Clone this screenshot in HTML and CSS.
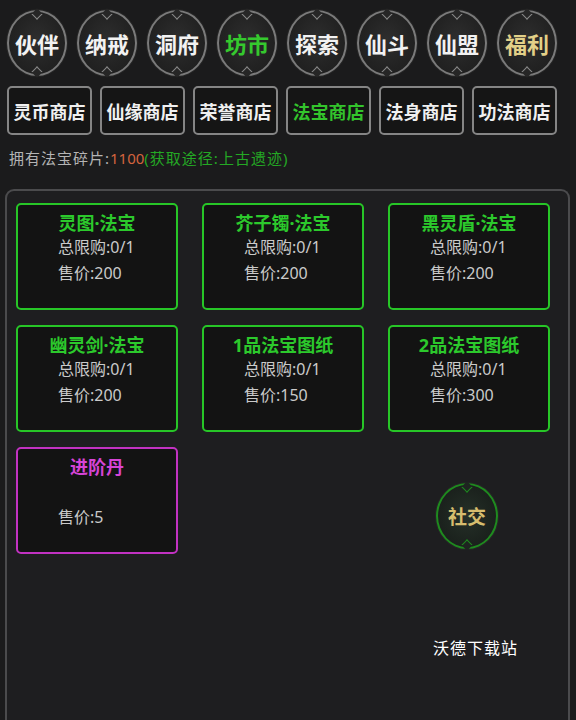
FILE: index.html
```html
<!DOCTYPE html>
<html lang="zh">
<head>
<meta charset="utf-8">
<title>法宝商店</title>
<link rel="stylesheet" href="styles.css">
</head>
<body>
<div class="screen">
  <nav class="nav">
    <div class="orb">伙伴</div>
    <div class="orb">纳戒</div>
    <div class="orb">洞府</div>
    <div class="orb orb-active">坊市</div>
    <div class="orb">探索</div>
    <div class="orb">仙斗</div>
    <div class="orb">仙盟</div>
    <div class="orb orb-gold">福利</div>
  </nav>
  <div class="tabs">
    <div class="tab">灵币商店</div>
    <div class="tab">仙缘商店</div>
    <div class="tab">荣誉商店</div>
    <div class="tab tab-active">法宝商店</div>
    <div class="tab">法身商店</div>
    <div class="tab">功法商店</div>
  </div>
  <div class="info">拥有法宝碎片:<span class="num">1100</span><span class="src">(获取途径:上古遗迹)</span></div>
  <section class="panel">
    <div class="grid">
      <div class="card">
        <div class="card-title">灵图·法宝</div>
        <div class="card-body"><div>总限购:0/1</div><div>售价:200</div></div>
      </div>
      <div class="card">
        <div class="card-title">芥子镯·法宝</div>
        <div class="card-body"><div>总限购:0/1</div><div>售价:200</div></div>
      </div>
      <div class="card">
        <div class="card-title">黑灵盾·法宝</div>
        <div class="card-body"><div>总限购:0/1</div><div>售价:200</div></div>
      </div>
      <div class="card">
        <div class="card-title">幽灵剑·法宝</div>
        <div class="card-body"><div>总限购:0/1</div><div>售价:200</div></div>
      </div>
      <div class="card">
        <div class="card-title">1品法宝图纸</div>
        <div class="card-body"><div>总限购:0/1</div><div>售价:150</div></div>
      </div>
      <div class="card">
        <div class="card-title">2品法宝图纸</div>
        <div class="card-body"><div>总限购:0/1</div><div>售价:300</div></div>
      </div>
      <div class="card card-purple">
        <div class="card-title">进阶丹</div>
        <div class="card-body"><div class="blank">&nbsp;</div><div>售价:5</div></div>
      </div>
    </div>
    <div class="orb orb-social">社交</div>
  </section>
  <div class="watermark">沃德下载站</div>
</div>
</body>
</html>
```

FILE: styles.css
```css
html, body {
  margin: 0;
  padding: 0;
  background: #1b1b1c;
}
body {
  font-family: "Noto Sans", "Noto Sans CJK SC", sans-serif;
  color: #c8c8c8;
  overflow: hidden;
}
.screen {
  position: relative;
  width: 576px;
  height: 720px;
  overflow: hidden;
}
.nav {
  display: flex;
  gap: 10px;
  padding: 10px 0 0 7px;
}
.orb {
  position: relative;
  box-sizing: border-box;
  width: 60px;
  height: 66px;
  border-radius: 50%;
  border: 2px solid #7a7a7a;
  background: radial-gradient(ellipse at 50% 45%, #2e2e2e 0%, #232323 55%, #1c1c1c 100%);
  box-shadow: 0 0 0 1px #262626;
  display: flex;
  align-items: center;
  justify-content: center;
  font-size: 22px;
  font-weight: 700;
  color: #f2f2f2;
}
.orb::before,
.orb::after {
  content: "";
  position: absolute;
  left: 50%;
  width: 6px;
  height: 6px;
  margin-left: -4px;
  border: 1px solid #8a8a8a;
  background: #262626;
  transform: rotate(45deg);
}
.orb::before {
  top: -2px;
  border-top-color: transparent;
  border-left-color: transparent;
}
.orb::after {
  bottom: -2px;
  border-bottom-color: transparent;
  border-right-color: transparent;
}
.orb-active { color: #35c92e; }
.orb-gold { color: #e2d088; }

.tabs {
  display: flex;
  gap: 8px;
  padding: 10px 0 0 7px;
}
.tab {
  box-sizing: border-box;
  width: 85px;
  height: 49px;
  border: 2px solid #858585;
  border-radius: 5px;
  background: #151515;
  display: flex;
  align-items: center;
  justify-content: center;
  font-size: 18px;
  font-weight: 700;
  color: #f0f0f0;
}
.tab-active { color: #33c42c; }

.info {
  margin-top: 13px;
  padding-left: 9px;
  font-size: 15px;
  line-height: 20px;
  letter-spacing: 1px;
  color: #b4b4b4;
}
.info .num { color: #d4643e; letter-spacing: 0; }
.info .src { color: #24a824; }

.panel {
  position: relative;
  margin: 21px 6px 0 5px;
  height: 560px;
  border: 2px solid #4b4b4d;
  border-bottom: none;
  border-radius: 9px 9px 0 0;
  background: #1e1e20;
  padding: 12px 0 0 9px;
  box-sizing: border-box;
}
.grid {
  display: grid;
  grid-template-columns: repeat(3, 162px);
  grid-auto-rows: 107px;
  column-gap: 24px;
  row-gap: 15px;
}
.card {
  box-sizing: border-box;
  border: 2px solid #27c627;
  border-radius: 5px;
  background: #131313;
  padding-top: 7px;
  display: flex;
  flex-direction: column;
  align-items: center;
}
.card-title {
  font-size: 18px;
  line-height: 22px;
  font-weight: 700;
  color: #2cc92c;
}
.card-body {
  font-size: 16px;
  line-height: 26px;
  color: #cacaca;
  text-align: left;
  min-width: 78px;
}
.card-purple {
  border-color: #c232c2;
}
.card-purple .card-title { color: #d644d6; }

.orb-social {
  position: absolute;
  left: 429px;
  top: 292px;
  width: 62px;
  border-color: #1f8a1f;
  color: #d6bd6e;
  font-size: 19px;
  background: radial-gradient(ellipse at 50% 50%, #253028 0%, #1c231e 60%, #181a19 100%);
}
.orb-social::before,
.orb-social::after {
  border-color: #1f8a1f;
  background: #1e2420;
}
.orb-social::before {
  border-top-color: transparent;
  border-left-color: transparent;
}
.orb-social::after {
  border-bottom-color: transparent;
  border-right-color: transparent;
}

.watermark {
  position: absolute;
  left: 433px;
  top: 636px;
  font-size: 16px;
  line-height: 24px;
  font-weight: 400;
  color: #ffffff;
  letter-spacing: 1px;
}
```
